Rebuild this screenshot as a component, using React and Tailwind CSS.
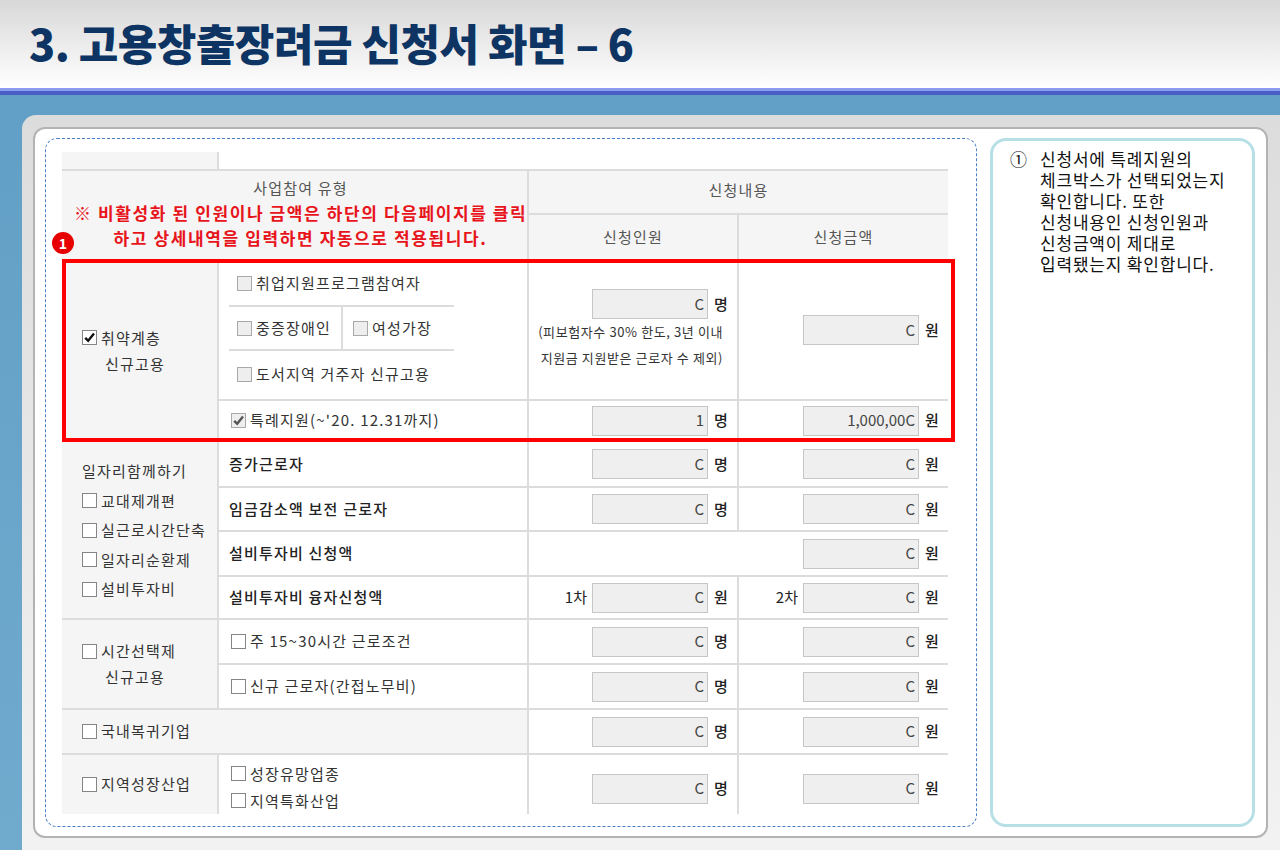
const LINE = "border-2 border-[#dcdcdc]"

function Box({ checked, light }) {
  return (
    <span
      className={`inline-flex items-center justify-center w-[15px] h-[15px] border shrink-0 ${
        light ? "border-[#a9a9a9] bg-[#eeeeee]" : "border-[#858585] bg-white"
      }`}
    >
      {checked && (
        <svg width="13" height="13" viewBox="0 0 13 13">
          <path
            d="M2.2 6.8 L5.2 9.8 L11 2.6"
            fill="none"
            stroke={light ? "#555555" : "#111111"}
            strokeWidth="2.4"
          />
        </svg>
      )}
    </span>
  )
}

function Field({ value = "C", unit }) {
  return (
    <div className="flex items-center gap-[6px]">
      <div className="w-[116px] h-[30px] bg-[#efefef] border border-[#c6c6c6] flex items-center justify-end pr-[3px] text-[15px] tracking-normal text-[#444]">
        {value}
      </div>
      <span className="text-[15px] font-medium text-[#222]">{unit}</span>
    </div>
  )
}

function FieldCell({ value, unit, label, colSpan }) {
  return (
    <td className={LINE} colSpan={colSpan}>
      <div className="flex items-center justify-end pr-[8px] gap-[5px]">
        {label && <span className="text-[15px] text-[#222] tracking-normal">{label}</span>}
        <Field value={value} unit={unit} />
      </div>
    </td>
  )
}

function Check({ children, checked, light, className = "" }) {
  return (
    <div className={`flex items-center gap-[4px] ${className}`}>
      <Box checked={checked} light={light} />
      <span>{children}</span>
    </div>
  )
}

function FormTable() {
  return (
    <div className="relative">
      <table className="table-fixed border-collapse border-hidden w-[886px] text-[15px] tracking-[1.2px] text-[#333]">
        <colgroup>
          <col className="w-[156px]" />
          <col className="w-[310px]" />
          <col className="w-[210px]" />
          <col className="w-[210px]" />
        </colgroup>
        <tbody>
          <tr className="h-[18px]">
            <td className={`${LINE} bg-[#f5f5f5]`}></td>
            <td className={LINE} colSpan={3}></td>
          </tr>

          {/* header */}
          <tr className="h-[44px]">
            <td className={`${LINE} bg-[#f5f5f5] text-center pl-[12px] pb-[6px]`} colSpan={2} rowSpan={2}>
              <div className="text-[#555] leading-[25px]">사업참여 유형</div>
              <div className="text-[17px] font-bold text-[#e8141b] leading-[25px] tracking-[1.6px] whitespace-nowrap">
                ※ 비활성화 된 인원이나 금액은 하단의 다음페이지를 클릭
                <br />
                하고 상세내역을 입력하면 자동으로 적용됩니다.
              </div>
            </td>
            <td className={`${LINE} bg-[#f5f5f5] text-center text-[#555] pb-[4px]`} colSpan={2}>
              신청내용
            </td>
          </tr>
          <tr className="h-[46px]">
            <td className={`${LINE} bg-[#f5f5f5] text-center text-[#555]`}>신청인원</td>
            <td className={`${LINE} bg-[#f5f5f5] text-center text-[#555]`}>신청금액</td>
          </tr>

          {/* 취약계층 신규고용 */}
          <tr className="h-[140px]">
            <td className={`${LINE} bg-[#f5f5f5]`} rowSpan={2}>
              <div className="pl-[20px] leading-[26px]">
                <Check checked>취약계층</Check>
                <div className="pl-[23px]">신규고용</div>
              </div>
            </td>
            <td className={`${LINE} align-top`}>
              <div className="ml-[10px] w-[225px]">
                <Check light className="h-[46px] pl-[8px] border-b-2 border-[#dcdcdc]">
                  취업지원프로그램참여자
                </Check>
                <div className="h-[44px] flex border-b-2 border-[#dcdcdc]">
                  <Check light className="w-[114px] pl-[8px] border-r-2 border-[#dcdcdc]">
                    중증장애인
                  </Check>
                  <Check light className="pl-[10px]">
                    여성가장
                  </Check>
                </div>
                <Check light className="h-[46px] pl-[8px]">
                  도서지역 거주자 신규고용
                </Check>
              </div>
            </td>
            <td className={LINE}>
              <div className="flex flex-col items-end pr-[8px]">
                <Field unit="명" />
                <div className="text-[13px] leading-[26px] text-right text-[#333] pr-[6px] tracking-[0.6px]">
                  (피보험자수 30% 한도, 3년 이내
                  <br />
                  지원금 지원받은 근로자 수 제외)
                </div>
              </div>
            </td>
            <FieldCell unit="원" />
          </tr>
          <tr className="h-[41px]">
            <td className={LINE}>
              <Check checked light className="pl-[12px]">
                특례지원(~'20. 12.31까지)
              </Check>
            </td>
            <FieldCell value="1" unit="명" />
            <FieldCell value="1,000,00C" unit="원" />
          </tr>

          {/* 일자리함께하기 */}
          <tr className="h-[46px]">
            <td className={`${LINE} bg-[#f5f5f5]`} rowSpan={4}>
              <div className="pl-[20px] leading-[29.5px]">
                <div>일자리함께하기</div>
                <Check>교대제개편</Check>
                <Check>실근로시간단축</Check>
                <Check>일자리순환제</Check>
                <Check>설비투자비</Check>
              </div>
            </td>
            <td className={`${LINE} pl-[10px] text-[#222] font-medium`}>증가근로자</td>
            <FieldCell unit="명" />
            <FieldCell unit="원" />
          </tr>
          <tr className="h-[44px]">
            <td className={`${LINE} pl-[10px] text-[#222] font-medium`}>임금감소액 보전 근로자</td>
            <FieldCell unit="명" />
            <FieldCell unit="원" />
          </tr>
          <tr className="h-[45px]">
            <td className={`${LINE} pl-[10px] text-[#222] font-medium`}>설비투자비 신청액</td>
            <FieldCell unit="원" colSpan={2} />
          </tr>
          <tr className="h-[43px]">
            <td className={`${LINE} pl-[10px] text-[#222] font-medium`}>설비투자비 융자신청액</td>
            <FieldCell label="1차" unit="원" />
            <FieldCell label="2차" unit="원" />
          </tr>

          {/* 시간선택제 신규고용 */}
          <tr className="h-[45px]">
            <td className={`${LINE} bg-[#f5f5f5]`} rowSpan={2}>
              <div className="pl-[20px] leading-[26px]">
                <Check>시간선택제</Check>
                <div className="pl-[23px]">신규고용</div>
              </div>
            </td>
            <td className={LINE}>
              <Check className="pl-[12px]">주 15~30시간 근로조건</Check>
            </td>
            <FieldCell unit="명" />
            <FieldCell unit="원" />
          </tr>
          <tr className="h-[45px]">
            <td className={LINE}>
              <Check className="pl-[12px]">신규 근로자(간접노무비)</Check>
            </td>
            <FieldCell unit="명" />
            <FieldCell unit="원" />
          </tr>

          {/* 국내복귀기업 */}
          <tr className="h-[45px]">
            <td className={`${LINE} bg-[#f5f5f5]`} colSpan={2}>
              <Check className="pl-[20px]">국내복귀기업</Check>
            </td>
            <FieldCell unit="명" />
            <FieldCell unit="원" />
          </tr>

          {/* 지역성장산업 */}
          <tr className="h-[60px]">
            <td className={`${LINE} bg-[#f5f5f5]`}>
              <Check className="pl-[20px]">지역성장산업</Check>
            </td>
            <td className={LINE}>
              <div className="pl-[12px] leading-[27px] pt-[4px]">
                <Check>성장유망업종</Check>
                <Check>지역특화산업</Check>
              </div>
            </td>
            <td className={`${LINE} pt-[8px]`}>
              <div className="flex justify-end pr-[8px]">
                <Field unit="명" />
              </div>
            </td>
            <td className={`${LINE} pt-[8px]`}>
              <div className="flex justify-end pr-[8px]">
                <Field unit="원" />
              </div>
            </td>
          </tr>
        </tbody>
      </table>

      {/* highlight box + marker */}
      <div className="absolute left-0 top-[107px] w-[893px] h-[183px] border-4 border-[#ff0000] pointer-events-none"></div>
      <div className="absolute left-[-10px] top-[80px] w-[22px] h-[22px] rounded-full bg-[#e60000] text-white text-[14px] font-bold flex items-center justify-center leading-none">
        1
      </div>
    </div>
  )
}

export default function App() {
  return (
    <div className="w-[1280px] h-[850px] overflow-hidden font-['Noto_Sans_CJK_KR','Noto_Sans',sans-serif]">
      {/* title bar */}
      <header className="h-[88px] bg-gradient-to-b from-[#d8d8d8] to-white pl-[29px] pt-[18px]">
        <h1 className="text-[43px] leading-[48px] font-black text-[#0d3463] tracking-[-0.5px]">
          3. 고용창출장려금 신청서 화면 – 6
        </h1>
      </header>
      <div className="h-[3px] bg-[#8b9cf0]"></div>
      <div className="h-[4px] bg-[#4a5fc6]"></div>

      {/* blue backdrop */}
      <div className="h-[755px] bg-gradient-to-b from-[#629fc6] to-[#70abce] pt-[20px] pl-[22px]">
        <div className="h-[760px] rounded-tl-[14px] bg-gradient-to-b from-[#dcdcdc] to-[#f3f3f3] pt-[12px] pl-[11px]">
          <div className="w-[1235px] h-[711px] bg-white border-2 border-[#b3b3b3] rounded-[12px] flex gap-[13px] pl-[10px] pt-[9px]">
            {/* form */}
            <div className="w-[932px] h-[689px] border border-dashed border-[#4b7fc5] rounded-[12px] pl-[16px] pt-[13px]">
              <FormTable />
            </div>

            {/* note */}
            <div className="w-[265px] h-[689px] border-[3px] border-[#b6dfe6] rounded-[16px] pl-[17px] pt-[7px] flex text-[17px] leading-[21px] tracking-[0.8px] text-[#111]">
              <span className="w-[30px] shrink-0">①</span>
              <div>
                신청서에 특례지원의
                <br />
                체크박스가 선택되었는지
                <br />
                확인합니다. 또한
                <br />
                신청내용인 신청인원과
                <br />
                신청금액이 제대로
                <br />
                입력됐는지 확인합니다.
              </div>
            </div>
          </div>
        </div>
      </div>
    </div>
  )
}
